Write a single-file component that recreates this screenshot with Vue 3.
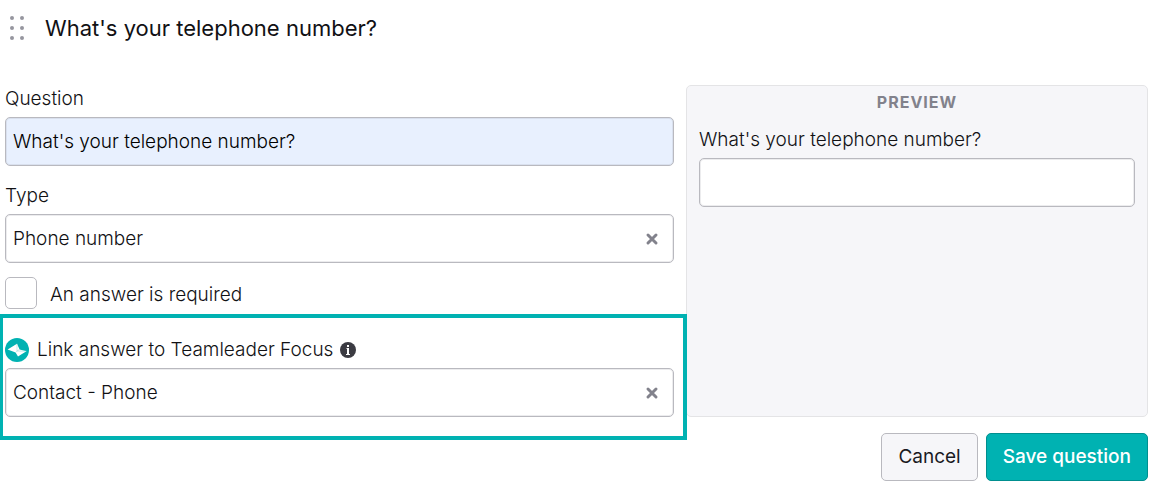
<template>
  <form class="editor" @submit.prevent>
    <header class="editor__header">
      <svg class="editor__handle" viewBox="0 0 16 26" aria-hidden="true">
        <circle v-for="dot in dots" :key="dot.id" :cx="dot.x" :cy="dot.y" r="2" />
      </svg>
      <h1 class="editor__title">{{ question }}</h1>
    </header>

    <div class="editor__body">
      <div class="fields">
        <div class="field">
          <label class="label" for="question">Question</label>
          <input id="question" v-model="question" class="input input--filled" type="text" />
        </div>

        <div class="field">
          <label class="label" for="type">Type</label>
          <div class="select">
            <select id="type" v-model="type" class="select__control">
              <option value=""></option>
              <option value="phone">Phone number</option>
            </select>
            <button class="select__clear" type="button" aria-label="Clear type" @click="type = ''">
              <svg viewBox="0 0 14 14"><path d="M3 3l8 8M11 3l-8 8" /></svg>
            </button>
          </div>
        </div>

        <label class="check">
          <input v-model="required" class="check__box" type="checkbox" />
          <span class="check__text">An answer is required</span>
        </label>

        <div class="field field--linked">
          <label class="label label--icons" for="link">
            <svg class="label__logo" viewBox="0 0 24 24" aria-hidden="true">
              <circle cx="12" cy="12" r="12" fill="#00b2b2" />
              <path d="M12 5.800L14.600 11.400 21.400 13.200 13 18.600 10.600 14.600 2.600 11.600Z" fill="#fff" />
              <path d="M12 5.800v7.200M14.600 11.400l-2.600 1.600M10.600 14.600L12 13l9.400.2" fill="none" stroke="#9fdede" stroke-width="0.6" />
            </svg>
            <span>Link answer to Teamleader Focus</span>
            <svg class="label__info" viewBox="0 0 16 16" aria-hidden="true">
              <circle cx="8" cy="8" r="8" fill="#3b3b42" />
              <rect x="7" y="3" width="2" height="2" fill="#fff" />
              <path d="M6.500 6H9v6h1v1H6v-1h1V7h-.5z" fill="#fff" />
            </svg>
          </label>
          <div class="select">
            <select id="link" v-model="link" class="select__control">
              <option value=""></option>
              <option value="contact-phone">Contact - Phone</option>
            </select>
            <button class="select__clear" type="button" aria-label="Clear link" @click="link = ''">
              <svg viewBox="0 0 14 14"><path d="M3 3l8 8M11 3l-8 8" /></svg>
            </button>
          </div>
        </div>
      </div>

      <section class="preview">
        <h2 class="preview__title">PREVIEW</h2>
        <label class="label" for="answer">{{ question }}</label>
        <input id="answer" v-model="answer" class="input" type="tel" />
      </section>
    </div>

    <footer class="editor__footer">
      <button class="btn" type="button">Cancel</button>
      <button class="btn btn--primary" type="submit">Save question</button>
    </footer>
  </form>
</template>

<script setup>
import { ref } from 'vue'

const question = ref("What's your telephone number?")
const type = ref('phone')
const required = ref(false)
const link = ref('contact-phone')
const answer = ref('')

const dots = [3, 13, 23].flatMap((y) => [3, 13].map((x) => ({ id: `${x}-${y}`, x, y })))
</script>

<style>
body {
  margin: 0;
  background: #fff;
}
</style>

<style scoped>
.editor,
.editor * {
  box-sizing: border-box;
}

.editor {
  padding: 0 14px 10px 5px;
  color: #111114;
  font-family: Inter, 'Liberation Sans', sans-serif;
  font-size: 19px;
  font-weight: 300;
  line-height: 28px;
}

.editor__header {
  display: flex;
  align-items: center;
  gap: 20px;
  height: 56px;
  margin-bottom: 29px;
  padding-left: 4px;
}

.editor__handle {
  width: 16px;
  height: 26px;
  fill: #96969f;
}

.editor__title {
  margin: 0;
  font-size: 22px;
  font-weight: 400;
}

.editor__body {
  display: grid;
  grid-template-columns: 669fr 462fr;
  gap: 12px;
}

.fields {
  display: flex;
  flex-direction: column;
  gap: 16px;
}

.label {
  display: block;
  margin-bottom: 4px;
}

.label--icons {
  display: flex;
  align-items: center;
}

.label__logo {
  width: 24px;
  height: 24px;
  margin-right: 8px;
}

.label__info {
  width: 16px;
  height: 16px;
  margin-left: 7px;
}

.input,
.select {
  display: block;
  width: 100%;
  height: 49px;
  border: 1px solid #b9b9bf;
  border-radius: 5px;
  background: #fff;
  box-shadow: inset 0 0 0 1px #ececee;
}

.input {
  padding: 0 7px;
  color: inherit;
  font: inherit;
}

.input--filled {
  background: #e8f0fe;
  box-shadow: inset 0 0 0 1px #d9e0ee;
  color: #000;
}

.select {
  display: flex;
  align-items: center;
  padding: 0 13px 0 7px;
}

.select__control {
  flex: 1;
  min-width: 0;
  height: 40px;
  padding: 0;
  border: 0;
  background: transparent;
  color: inherit;
  font: inherit;
  appearance: none;
}

.select__clear {
  display: flex;
  padding: 1px;
  border: 0;
  background: none;
}

.select__clear svg {
  width: 14px;
  height: 14px;
  fill: none;
  stroke: #82828c;
  stroke-width: 3;
  stroke-linecap: round;
}

.check {
  display: flex;
  align-items: center;
  gap: 13px;
  margin: -2px 0 11px;
}

.check__box {
  width: 32px;
  height: 32px;
  margin: 0;
  border: 1px solid #b9b9bf;
  border-radius: 5px;
  background: #fff;
  appearance: none;
}

.check__box:checked {
  background: #00b2b2;
}

.check__text {
  padding-top: 4px;
}

.field--linked {
  position: relative;
}

.field--linked::after {
  content: '';
  position: absolute;
  inset: -22px -13px -23px -5px;
  border: 4px solid #00b2b2;
  border-left-width: 3px;
  pointer-events: none;
}

.preview {
  padding: 4px 12px 12px;
  border: 1px solid #e4e4e6;
  border-radius: 5px;
  background: #f6f6f9;
}

.preview__title {
  margin: 0 0 12px;
  color: #82828c;
  font-size: 16px;
  font-weight: 700;
  line-height: 24px;
  letter-spacing: 1px;
  text-align: center;
}

.editor__footer {
  display: flex;
  justify-content: flex-end;
  gap: 8px;
  margin-top: 16px;
}

.btn {
  height: 48px;
  padding: 0 16px;
  border: 1px solid #b9b9bf;
  border-radius: 5px;
  background: #f6f6f9;
  color: #1a1a1f;
  font: inherit;
  font-weight: 400;
}

.btn--primary {
  border-color: #008f8f;
  background: #00b2b2;
  color: #fff;
  font-weight: 500;
}
</style>
